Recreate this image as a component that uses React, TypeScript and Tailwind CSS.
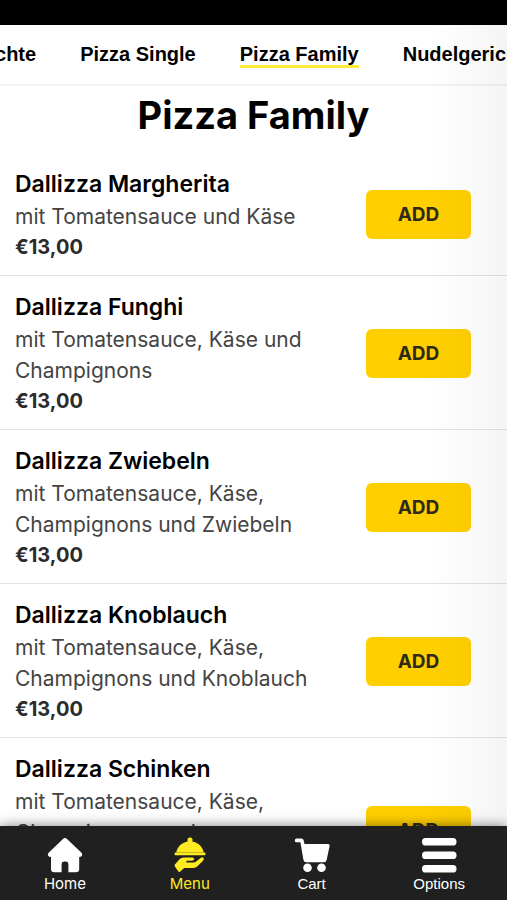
import type { ReactNode } from "react";

const categories = ["Gerichte", "Pizza Single", "Pizza Family", "Nudelgerichte"];

const dishes = [
  { name: "Dallizza Margherita", text: "mit Tomatensauce und Käse", price: "€13,00" },
  { name: "Dallizza Funghi", text: "mit Tomatensauce, Käse und Champignons", price: "€13,00" },
  { name: "Dallizza Zwiebeln", text: "mit Tomatensauce, Käse, Champignons und Zwiebeln", price: "€13,00" },
  { name: "Dallizza Knoblauch", text: "mit Tomatensauce, Käse, Champignons und Knoblauch", price: "€13,00" },
  { name: "Dallizza Schinken", text: "mit Tomatensauce, Käse, Champignons und Vorderschinken", price: "€13,00" },
];

function Icon({ children }: { children: ReactNode }) {
  return (
    <svg viewBox="0 0 36 36" className="size-9" fill="currentColor" aria-hidden="true">
      {children}
    </svg>
  );
}

function HomeIcon() {
  return (
    <Icon>
      <path d="M16 1.9 Q18 .1 20 1.9 L34.5 15.8 Q35.8 17.2 34.8 18.7 Q34 20 32.2 20 V32 Q32.2 35.2 28.8 35.2 H21.4 V27 Q21.4 24.5 19 24.5 H17 Q14.6 24.5 14.6 27 V35.2 H7.4 Q4 35.2 4 32 V20 Q2 20 1.2 18.7 Q.2 17.2 1.6 15.8 Z" />
    </Icon>
  );
}

function MenuIcon() {
  return (
    <Icon>
      <path d="M18 .4 a2.6 2.6 0 0 1 2.2 4 C26.500 5.600 30.900 9.800 31.700 15.600 H4.300 C5.100 9.800 9.500 5.600 15.800 4.400 A2.600 2.600 0 0 1 18 .4Z" />
      <rect x="2.500" y="15.400" width="31" height="2.800" rx="1.200" />
      <path d="M2.900 27.600 L7.500 22.300 Q9.200 20.400 12 20.400 H20.400 Q22.300 20.500 22.200 22 Q22 23.600 20 23.700 H14.400 V25.400 H21.400 Q23 25.400 24.200 24.500 L28.500 21 Q31 19.500 31.700 21.300 Q32.100 22.600 31 23.800 L25.200 29.500 Q23.700 30.900 21.400 30.900 H12.200 L8.300 34.600 Q7.300 35.500 6.400 34.400 L3 29.800 Q2.200 28.600 2.900 27.600Z" />
    </Icon>
  );
}

function CartIcon() {
  return (
    <Icon>
      <path d="M2.500 1.500 H7.500 Q9.300 1.500 9.700 3.400 L10.500 7 H34 Q36 7 35.600 9 L32.700 22.800 Q32.200 25.300 29.700 25.300 H12.400 Q9.900 25.300 9.400 22.800 L6.400 5.300 H2.500 Q.8 5.300 .8 3.400 Q.8 1.500 2.500 1.500Z" />
      <circle cx="13.500" cy="30.800" r="4.300" />
      <circle cx="27.500" cy="30.800" r="4.300" />
    </Icon>
  );
}

function OptionsIcon() {
  return (
    <Icon>
      <rect x="1" y="1" width="34.500" height="7.500" rx="3.600" />
      <rect x="1" y="14.500" width="34.500" height="7.500" rx="3.600" />
      <rect x="1" y="28" width="34.500" height="7.500" rx="3.600" />
    </Icon>
  );
}

const links = [
  { label: "Home", icon: <HomeIcon />, style: "text-white font-[Inter,sans-serif]" },
  { label: "Menu", icon: <MenuIcon />, style: "text-[#ffeb22] font-[Inter,sans-serif]" },
  { label: "Cart", icon: <CartIcon />, style: "text-white" },
  { label: "Options", icon: <OptionsIcon />, style: "text-white" },
];

export default function App() {
  return (
    <div className="relative flex h-screen flex-col overflow-hidden bg-white font-[Inter,sans-serif] text-black">
      <div className="h-[25px] shrink-0 bg-black" />
      <nav className="shrink-0 overflow-hidden border-b-2 border-[#f2f2f2] font-['Liberation_Sans',Arial,sans-serif]">
        <div className="-ml-[45px] flex h-[59px] items-center gap-11 whitespace-nowrap pb-[2px] text-[20px] font-bold leading-[22px]">
          {categories.map((name) => (
            <a
              key={name}
              href="#menu"
              className={
                name === "Pizza Family"
                  ? "border-y-3 border-t-transparent border-b-[#ffeb3b]"
                  : "border-y-3 border-transparent"
              }
            >
              {name}
            </a>
          ))}
        </div>
      </nav>

      <main className="min-h-0 flex-1 overflow-hidden">
        <h1 className="h-[67px] pt-1 text-center text-[38px] font-bold leading-[50px]">Pizza Family</h1>
        <ul>
          {dishes.map((dish) => (
            <li
              key={dish.name}
              className="flex items-center justify-between border-b border-[#e2e2e2] pt-[14px] pr-9 pb-[13px] pl-[15px]"
            >
              <div className="w-[310px]">
                <h2 className="text-[23px] font-semibold leading-[34px]">{dish.name}</h2>
                <p className="text-[21px] leading-[31px] text-[#444]">{dish.text}</p>
                <p className="text-[20px] font-bold leading-[30px] text-[#2b2b2b]">{dish.price}</p>
              </div>
              <button
                type="button"
                aria-label={`ADD ${dish.name}`}
                className="h-[49px] w-[105px] rounded-md bg-[#ffcf00] pt-[2px] text-[19px] font-bold text-[#2e2b18]"
              >
                ADD
              </button>
            </li>
          ))}
        </ul>
      </main>

      <div className="pointer-events-none absolute top-[25px] right-0 bottom-0 w-20 bg-linear-to-r from-transparent to-black/4" />

      <nav className="relative flex h-[74px] shrink-0 justify-around bg-[#202020] pt-[11px] pl-[2px] font-['Liberation_Sans',Arial,sans-serif] shadow-[0_0_12px_rgba(0,0,0,0.5)]">
        {links.map((link) => (
          <a key={link.label} href="#menu" className={`flex flex-col items-center ${link.style}`}>
            {link.icon}
            <span className="text-[15px] leading-[22px]">{link.label}</span>
          </a>
        ))}
      </nav>
    </div>
  );
}
